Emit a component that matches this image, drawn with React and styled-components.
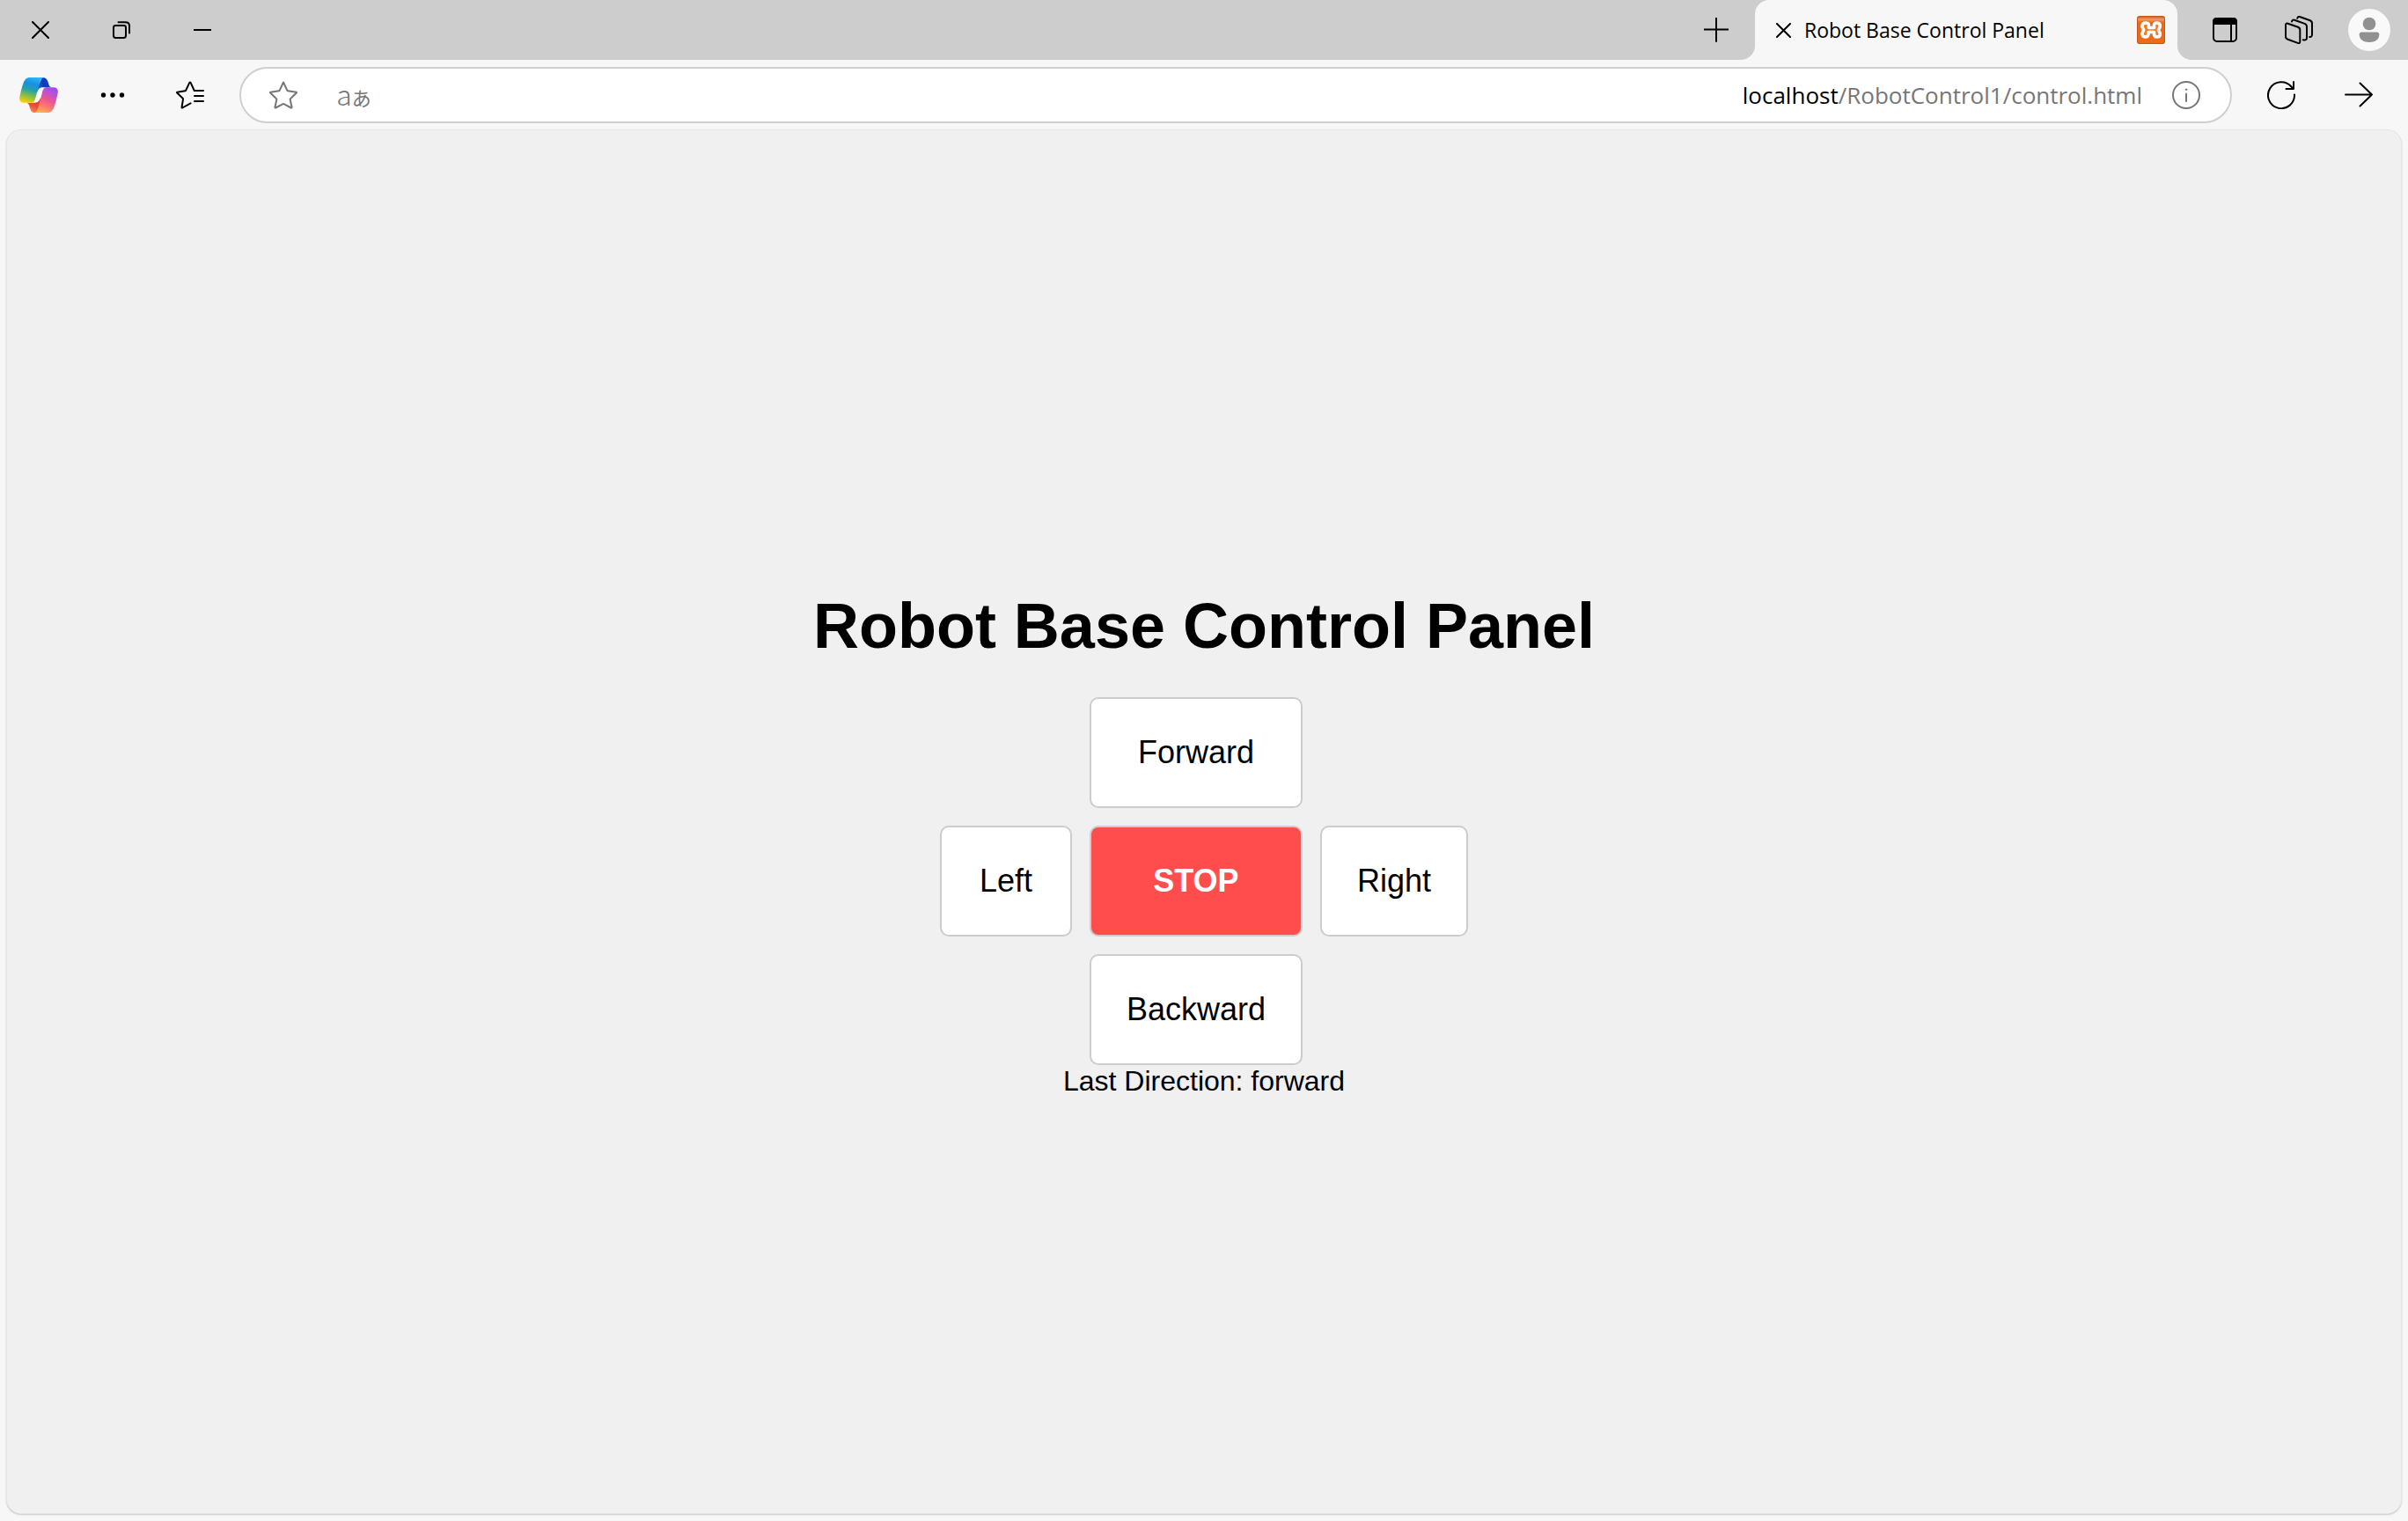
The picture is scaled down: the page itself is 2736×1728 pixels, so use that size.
import React, { useState } from "react";
import styled, { createGlobalStyle, css } from "styled-components";

const uiFont = `"Segoe UI", "Open Sans", "Noto Sans", "Noto Sans CJK JP", sans-serif`;
const pageFont = `Arial, "Liberation Sans", sans-serif`;

const GlobalStyle = createGlobalStyle`
  * { box-sizing: border-box; }
  body { margin: 0; background: #f7f7f7; }
  button { margin: 0; padding: 0; border: 0; background: none; color: inherit; }
`;

const Window = styled.div`
  display: flex;
  flex-direction: column;
  min-height: 100vh;
  background: #f7f7f7;
  color: #000;
  font-family: ${uiFont};
`;

const TitleBar = styled.header`
  display: flex;
  height: 68px;
`;

const Strip = styled.div`
  display: flex;
  align-items: center;
  background: #cdcdcd;
`;

const LeftStrip = styled(Strip)`
  flex: 1;
  justify-content: space-between;
  border-bottom-right-radius: 16px;
`;

const RightStrip = styled(Strip)`
  padding: 0 2px 0 8px;
  border-bottom-left-radius: 16px;
`;

const Group = styled.div`
  display: flex;
`;

const IconButton = styled.button`
  display: flex;
  align-items: center;
  justify-content: center;
  flex: none;
  width: ${(p) => p.$width || 88}px;
  height: 64px;
`;

const TabSlot = styled.div`
  background: #cdcdcd;
`;

const Tab = styled.div`
  display: flex;
  align-items: center;
  width: 480px;
  height: 68px;
  padding: 0 14px 0 16px;
  border-radius: 16px 16px 0 0;
  background: #f7f7f7;
`;

const TabClose = styled.button`
  display: flex;
  align-items: center;
  justify-content: center;
  width: 32px;
  height: 32px;
`;

const TabTitle = styled.span`
  flex: 1;
  padding-left: 8px;
  font-size: 23px;
  line-height: 32px;
  white-space: nowrap;
`;

const Avatar = styled.span`
  display: flex;
  align-items: center;
  justify-content: center;
  width: 48px;
  height: 48px;
  border-radius: 50%;
  background: #f9f9f9;
`;

const Toolbar = styled.nav`
  display: flex;
  align-items: center;
  padding: 8px 12px 7px 4px;
`;

const AddressBar = styled.div`
  display: flex;
  align-items: center;
  flex: 1;
  height: 64px;
  margin: 0 12px;
  padding-left: 12px;
  border: 2px solid #cfcfcf;
  border-radius: 32px;
  background: #fff;
  color: #767676;
`;

const Address = styled.div`
  display: flex;
  flex: 1;
  justify-content: flex-end;
  align-items: center;
  font-size: 26px;
  line-height: 40px;
`;

const Host = styled.label`
  color: #000;
`;

const Path = styled.input`
  field-sizing: content;
  padding: 0;
  border: 0;
  outline: 0;
  background: none;
  color: #767676;
  font: inherit;
`;

const Translate = styled.span`
  display: flex;
  align-items: baseline;
  font-family: "Noto Sans CJK JP", sans-serif;
  font-size: 32px;
  font-weight: 300;
  line-height: 40px;
`;

const Kana = styled.span`
  font-size: 22px;
  font-weight: 400;
`;

const Page = styled.main`
  display: flex;
  flex: 1;
  flex-direction: column;
  align-items: center;
  justify-content: center;
  margin: 0 7px 8px;
  border: 1px solid #e6e6e6;
  border-radius: 17px;
  background: #f0f0f0;
  box-shadow: 0 1px 2px rgba(0, 0, 0, 0.2);
  font-family: ${pageFont};
`;

const Title = styled.h1`
  margin: 48px 0 39px;
  font-size: 72px;
  line-height: 84px;
  font-weight: 700;
`;

const Pad = styled.div`
  display: grid;
  grid-template-columns: 1fr auto auto;
  gap: 20px;
  width: 600px;
`;

const PadButton = styled.button`
  && {
    grid-column: ${(p) => p.$column};
    padding: 40px;
    border: 2px solid #ccc;
    border-radius: 10px;
    background: #fff;
    color: #000;
    font: 36px/42px ${pageFont};
    ${(p) =>
      p.$stop &&
      css`
        background: #ff4d4d;
        color: #fff;
        font-weight: 700;
      `}
  }
`;

const Status = styled.div`
  font-size: 32px;
  line-height: 36px;
`;

const Line = ({ w, h, width = 2, children }) => (
  <svg width={w} height={h} viewBox={`0 0 ${w} ${h}`} fill="none" stroke="currentColor" strokeWidth={width} strokeLinecap="round" strokeLinejoin="round" aria-hidden="true">
    {children}
  </svg>
);

const Cross = ({ size }) => (
  <Line w={size} h={size}>
    <path d={`M1 1L${size - 1} ${size - 1}M${size - 1} 1L1 ${size - 1}`} />
  </Line>
);

const Restore = () => (
  <Line w={20} h={20}>
    <rect x="1" y="5" width="14" height="14" rx="2.4" />
    <path d="M6.5 1.2H14.5Q19 1.2 19 5.5V13.5" />
  </Line>
);

const Xampp = () => (
  <svg width="32" height="32" viewBox="0 0 32 32" aria-hidden="true">
    <defs>
      <linearGradient id="xa" x2="0" y2="1">
        <stop stopColor="#c9622a" />
        <stop offset=".1" stopColor="#f29a63" />
        <stop offset=".22" stopColor="#e36c20" />
        <stop offset="1" stopColor="#ee6a15" />
      </linearGradient>
    </defs>
    <rect width="32" height="32" rx="3" fill="#c2581c" />
    <rect x="1" y="1" width="30" height="30" rx="2.5" fill="url(#xa)" />
    <path
      d="M13.500 10.500V13.500H19.500V10.500C19.500 7 26.300 7 26.300 11.500C26.300 14 24.500 15 24.500 16.200C24.500 17.500 26.500 18.500 26.300 21C26 25 19.800 25 19.500 21V18.500H13V21C12.500 25 6.300 25 6 20.700C5.900 18.400 7.600 17.300 7.600 16C7.600 14.800 6 14 6 11.700C6 7 13.500 7 13.500 10.500Z"
      fill="#ff7a1c"
      stroke="#fff"
      strokeWidth="3.600"
      strokeLinejoin="round"
    />
  </svg>
);

const SidebarWindow = () => (
  <svg width="28" height="28" viewBox="0 0 28 28" aria-hidden="true">
    <rect x="1" y="1" width="26" height="26" rx="4" fill="none" stroke="#000" strokeWidth="2" />
    <path d="M0 8V4.5Q0 0 4.5 0H23.500Q28 0 28 4.500V8Z" />
    <path d="M21 8V27" stroke="#000" strokeWidth="2" />
  </svg>
);

const Workspaces = () => (
  <Line w={32} h={32}>
    <path d="M1 10.500Q1 7.900 3.500 8.800L15 12.800Q17.300 13.700 17.300 16V29Q17.300 31.800 14.800 30.900L3.500 26.800Q1 25.900 1 23.500Z" />
    <path d="M8 6.500Q8.300 4 11 4.800L22.600 8.900Q25 9.900 25 12.300V25Q25 28.300 20.800 27.300" />
    <path d="M14.300 2.800Q15 .3 17.600 1.200L28.800 5.200Q31 6.100 31 8.500V21Q31 24.300 28.200 24" />
  </Line>
);

const Person = () => (
  <svg width="24" height="30" viewBox="0 0 24 30" fill="#919191" aria-hidden="true">
    <circle cx="12" cy="8" r="7.300" />
    <path d="M3.500 17.500H20.500Q23.300 17.500 23.300 20.300C23.300 26 18.500 29 12 29S.7 26 .7 20.300Q.7 17.500 3.500 17.500Z" />
  </svg>
);

const Copilot = () => (
  <svg width="44" height="40" viewBox="0 0 44 40" aria-hidden="true">
    <defs>
      <linearGradient id="cb" x1=".6" x2=".35" y1="0" y2="1">
        <stop stopColor="#2bb5f2" />
        <stop offset=".25" stopColor="#1690e2" />
        <stop offset=".5" stopColor="#28a0ad" />
        <stop offset=".72" stopColor="#79bd4e" />
        <stop offset="1" stopColor="#ffcb08" />
      </linearGradient>
      <linearGradient id="cd" x1="1" x2="0" y1=".5" y2=".8">
        <stop stopColor="#1648c8" />
        <stop offset=".5" stopColor="#1238bd" />
        <stop offset="1" stopColor="#2b85e8" />
      </linearGradient>
      <linearGradient id="cp" x1=".75" x2=".35" y1="0" y2="1">
        <stop stopColor="#9b4df0" />
        <stop offset=".2" stopColor="#b950dc" />
        <stop offset=".5" stopColor="#ee5590" />
        <stop offset=".75" stopColor="#fa7a72" />
        <stop offset="1" stopColor="#ffb04e" />
      </linearGradient>
      <linearGradient id="cr" x1=".7" x2=".3" y1="0" y2="1">
        <stop stopColor="#d93a2c" />
        <stop offset=".5" stopColor="#e84e35" />
        <stop offset="1" stopColor="#fa8a55" />
      </linearGradient>
    </defs>
    <path d="M21 11H30L22 29H14Z" fill="#fdfdfd" />
    <path d="M26 0C31 0 32 3 33 6.500C33.800 9.500 34.500 11 37 11.300H27C23.500 11.300 21.500 13 20.300 17L19 14Z" fill="url(#cd)" />
    <path d="M7 28.700C10.500 28.700 11 31 12 34.500C13 38 14 40 18 40C22 40 23 36 25 28L24 23C22.500 27 21 28.700 17 28.700Z" fill="url(#cr)" />
    <path d="M12 0H28C24.500 1 23.600 4 22.500 8L18.300 23.500C17.300 27 16.500 28.800 13 28.800H5C1 28.800-.5 26 .5 21.500C1.500 16 3 10.500 4.500 6.500C6 2.500 8 0 12 0Z" fill="url(#cb)" />
    <path d="M31.500 11.300H39C43 11.300 44.500 14 43.500 18.500C42.500 24 41 29.500 39.500 33.500C38 37.500 36 40 32 40H17C20 39 21 36 22 32L26 17C27 13 28.200 11.300 31.500 11.300Z" fill="url(#cp)" />
  </svg>
);

const Dots = () => (
  <svg width="28" height="6" viewBox="0 0 28 6" aria-hidden="true">
    <circle cx="3.500" cy="3" r="2.700" />
    <circle cx="14" cy="3" r="2.700" />
    <circle cx="24.500" cy="3" r="2.700" />
  </svg>
);

const Star = () => (
  <Line w={32} h={32}>
    <path d="M16 1.500L20.300 10.700Q20.600 11.200 21.200 11.300L30.700 12.700Q31.300 13 30.800 13.500L23.900 20.300Q23.600 20.700 23.700 21.200L25.600 30Q25.500 30.800 24.800 30.500L16.500 26.100Q16 25.900 15.500 26.100L7.200 30.500Q6.500 30.800 6.400 30L8.300 21.200Q8.400 20.700 8.100 20.300L1.200 13.500Q.7 13 1.300 12.700L10.800 11.300Q11.400 11.200 11.700 10.700Z" />
  </Line>
);

const Favorites = () => (
  <Line w={32} h={32}>
    <path d="M16.500 25.300L7.200 30.500Q6.500 30.800 6.500 30L8 20.800Q8.100 20.200 7.700 19.800L1.200 13.500Q.7 13 1.300 12.700L10.300 11.300Q10.900 11.200 11.200 10.700L15.300 1.800Q16 1 16.600 1.800L20.800 11H31M21 17H31M21 23H31" />
  </Line>
);

const Info = () => (
  <Line w={32} h={32}>
    <circle cx="16" cy="16" r="15" />
    <path d="M16 14.500V23" />
    <circle cx="16" cy="9.700" r=".8" fill="currentColor" strokeWidth="1" />
  </Line>
);

const Refresh = () => (
  <Line w={32} h={32}>
    <path d="M31 15.500A15 15 0 1 1 27.500 6.500L29.500 9M30 1V9H21.500" />
  </Line>
);

const Arrow = () => (
  <Line w={32} h={30}>
    <path d="M1 14.500H31M17.500 1.500L31 14.500L17.500 27.500" />
  </Line>
);

export default function App() {
  const [direction, setDirection] = useState("forward");
  const [path, setPath] = useState("/RobotControl1/control.html");

  return (
    <Window>
      <GlobalStyle />
      <TitleBar>
        <LeftStrip>
          <Group>
            <IconButton $width={92} aria-label="Close window"><Cross size={20} /></IconButton>
            <IconButton $width={92} aria-label="Restore window"><Restore /></IconButton>
            <IconButton $width={92} aria-label="Minimize window">
              <Line w={20} h={2}><path d="M0 1H20" /></Line>
            </IconButton>
          </Group>
          <IconButton aria-label="New tab">
            <Line w={28} h={28}><path d="M14 0V27M0 13.500H28" /></Line>
          </IconButton>
        </LeftStrip>
        <TabSlot>
          <Tab>
            <TabClose aria-label="Close tab"><Cross size={17} /></TabClose>
            <TabTitle>Robot Base Control Panel</TabTitle>
            <Xampp />
          </Tab>
        </TabSlot>
        <RightStrip>
          <IconButton $width={92} aria-label="Tab actions"><SidebarWindow /></IconButton>
          <IconButton $width={76} aria-label="Workspaces"><Workspaces /></IconButton>
          <IconButton $width={84} aria-label="Profile"><Avatar><Person /></Avatar></IconButton>
        </RightStrip>
      </TitleBar>
      <Toolbar>
        <IconButton $width={80} aria-label="Copilot"><Copilot /></IconButton>
        <IconButton aria-label="Settings and more"><Dots /></IconButton>
        <IconButton aria-label="Favorites"><Favorites /></IconButton>
        <AddressBar>
          <IconButton $width={72} aria-label="Add to favorites"><Star /></IconButton>
          <IconButton aria-label="Translate">
            <Translate>a<Kana>あ</Kana></Translate>
          </IconButton>
          <Address>
            <Host htmlFor="path">localhost</Host>
            <Path id="path" value={path} onChange={(e) => setPath(e.target.value)} spellCheck={false} />
          </Address>
          <IconButton $width={100} aria-label="Site information"><Info /></IconButton>
        </AddressBar>
        <IconButton aria-label="Refresh"><Refresh /></IconButton>
        <IconButton aria-label="Forward one page"><Arrow /></IconButton>
      </Toolbar>
      <Page>
        <Title>Robot Base Control Panel</Title>
        <Pad>
          <PadButton $column={2} onClick={() => setDirection("forward")}>Forward</PadButton>
          <PadButton $column={1} onClick={() => setDirection("left")}>Left</PadButton>
          <PadButton $column={2} $stop onClick={() => setDirection("stop")}>STOP</PadButton>
          <PadButton $column={3} onClick={() => setDirection("right")}>Right</PadButton>
          <PadButton $column={2} onClick={() => setDirection("backward")}>Backward</PadButton>
        </Pad>
        <Status>Last Direction: {direction}</Status>
      </Page>
    </Window>
  );
}
